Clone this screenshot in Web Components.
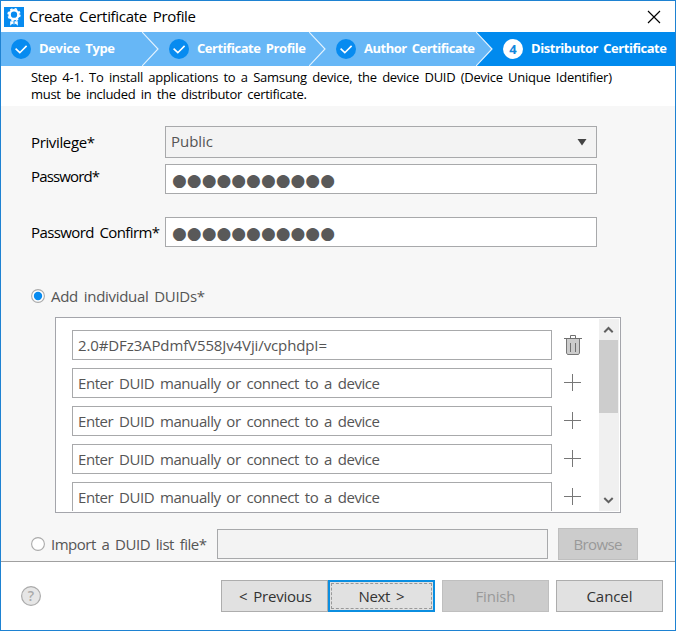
<!DOCTYPE html>
<html lang="en"><head><meta charset="utf-8"><title>Create Certificate Profile</title>
<style>
html,body{margin:0;height:100%;overflow:hidden;background:#fff}
body{font:15px/20px "Open Sans","Noto Sans",sans-serif;color:#000}
</style></head><body>
<certificate-dialog></certificate-dialog>
<script>
function define(name, html, ready) {
  const t = document.createElement('template');
  t.innerHTML = html;
  customElements.define(name, class extends HTMLElement {
    connectedCallback() {
      if (this.shadowRoot) return;
      this.attachShadow({mode: 'open'}).appendChild(t.content.cloneNode(true));
      if (ready) ready(this, this.shadowRoot);
    }
  });
}

/* A single line of text, tracked to fill the width given by its "w" attribute. */
define('fit-text', `<style>:host{display:block;flex:none;white-space:pre;word-spacing:2.3px}span{display:inline-block;white-space:pre}</style><span></span>`, (el, r) => {
  const s = r.querySelector('span'), w = +el.getAttribute('w');
  s.textContent = el.getAttribute('text');
  el.style.width = w + 'px';
  const n = [...s.textContent].length;
  s.style.letterSpacing = (w - s.getBoundingClientRect().width) / (n - 1) + 'px';
});

define('title-bar', `<style>
:host{display:flex;align-items:center;height:31px;padding-left:3px;background:#fff;box-sizing:border-box}
svg{display:block;flex:none}.t{margin:0 auto 2px 5px}.x{margin-right:14px}</style>
<svg width="20" height="20" viewBox="0 0 20 20"><rect width="20" height="20" fill="#078bf0"/><circle cx="10" cy="7.7" r="4.4" fill="none" stroke="#fff" stroke-width="2.5"/><circle cx="10" cy="7.7" r="5.9" fill="none" stroke="#fff" stroke-width="1.5" stroke-dasharray="2.4 2.23"/><path d="M6.2 14.3h3.3v3.3l-1.3-.8-2 2zM10.5 14.3h3.3v4.5l-2-2-1.3.8z" fill="#fff"/></svg>
<fit-text class="t" text="Create Certificate Profile" w="167"></fit-text>
<svg class="x" width="14" height="14" viewBox="0 0 14 14"><path d="M1 1l12 12M13 1L1 13" stroke="#000" stroke-width="1.15"/></svg>`);

define('wizard-step', `<style>
:host{display:flex;align-items:center;height:34px;box-sizing:border-box;background:#67b7f6;color:#fff;font-weight:700;font-size:13px}
svg{display:block;flex:none}fit-text{margin-left:8px;margin-bottom:2px}.c{margin-left:auto}
:host([active]){background:#008aee}</style>
<svg class="i" width="20" height="20" viewBox="0 0 20 20"></svg><svg class="c" width="17" height="34" viewBox="0 0 17 34"><path class="f" d="M0 0L16 17 0 34H17V0z"/><path d="M0 0L16 17 0 34" fill="none" stroke="#e4f3ff" stroke-width="1.15"/></svg>`,
(el, r) => {
  const a = el.hasAttribute('active');
  r.querySelector('.i').innerHTML = a
    ? '<circle cx="10" cy="10" r="10" fill="#fff"/><text x="10" y="14.6" text-anchor="middle" font-size="13" font-weight="700" fill="#1488dd">4</text>'
    : '<circle cx="10" cy="10" r="10" fill="#078bf0"/><path d="M4.6 9.7l4.2 4 6.8-6.8" fill="none" stroke="#fff" stroke-width="1.6"/>';
  const label = document.createElement('fit-text');
  label.setAttribute('text', el.getAttribute('label'));
  label.setAttribute('w', el.getAttribute('w'));
  r.querySelector('.i').after(label);
  if (a) r.querySelector('.c').remove();
  else r.querySelector('.f').setAttribute('fill', el.hasAttribute('before-active') ? '#008aee' : '#67b7f6');
});

define('wizard-steps', `<style>:host{display:grid;grid-template-columns:158px 167px 167px 1fr;height:34px;background:#67b7f6}
wizard-step{padding-left:10px}</style>
<wizard-step label="Device Type" w="76"></wizard-step><wizard-step label="Certificate Profile" w="109"></wizard-step><wizard-step label="Author Certificate" w="111" before-active></wizard-step><wizard-step label="Distributor Certificate" w="136" active></wizard-step>`);

define('text-box', `<style>:host{display:flex;align-items:center;box-sizing:border-box;flex:none;height:30px;border:1px solid #a8a9ab;background:#fff;color:#555;padding:0 0 0 5px}
:host([muted]){background:#f3f3f3}</style><slot></slot>`);

define('push-button', `<style>:host{display:flex;align-items:center;justify-content:center;box-sizing:border-box;flex:none;width:107px;height:32px;border:1px solid #adadad;background:#e1e1e1;color:#333;position:relative}
:host([off]){background:#ccc;border-color:#bfbfbf;color:#999}
:host([focused]){border:2px solid #0b8ee0}
:host([focused])::before{content:"";position:absolute;inset:1px;border:1px dashed #999}</style><slot></slot>`);

define('radio-option', `<style>:host{display:flex;align-items:center;gap:6px;height:20px;color:#555}svg{display:block;flex:none}</style>
<svg width="14" height="14" viewBox="0 0 14 14"><circle cx="7" cy="7" r="6.4" fill="#fff" stroke="#aaa" stroke-width="1.1"/><circle class="d" cx="7" cy="7" r="4.2" fill="#078bf0"/></svg><slot></slot>`,
(el, r) => { if (!el.hasAttribute('checked')) r.querySelector('.d').remove(); });

define('duid-row', `<style>:host{display:flex;align-items:center;gap:12px;height:30px;flex:none}text-box{width:480px}svg{display:block}</style>
<text-box><slot></slot></text-box><svg width="18" height="20" viewBox="0 0 18 20"></svg>`,
(el, r) => {
  r.querySelector('svg').innerHTML = el.hasAttribute('filled')
    ? '<path d="M2.5 3.5h13V18l-1 1.5h-11L2.5 18z" fill="#ccc" stroke="#777"/><path d="M0 3.5h18M6.5 3.5v-3h5v3M6.5 8v9M11.5 8v9" fill="none" stroke="#707070"/>'
    : '<path d="M0 9.5h17M8.5 1v17" stroke="#777" stroke-width="1"/>';
});

define('scroll-bar', `<style>:host{display:flex;flex-direction:column;align-items:flex-start;width:20px;height:192px;background:#f0f0f0}
svg{display:block;flex:none}.thumb{width:19px;height:73px;background:#cdcdcd}.d{margin-top:auto}</style>
<svg width="20" height="21" viewBox="0 0 20 21"><path d="M5.3 13.2L9.5 9l4.2 4.2" fill="none" stroke="#606060" stroke-width="2"/></svg><div class="thumb"></div><svg class="d" width="20" height="21" viewBox="0 0 20 21"><path d="M5.3 8L9.5 12.2 13.7 8" fill="none" stroke="#606060" stroke-width="2"/></svg>`);

define('duid-list', `<style>:host{display:flex;box-sizing:border-box;width:566px;height:196px;border:1px solid #a4a5ab;background:#fff;padding:1px;overflow:hidden}
.rows{display:flex;flex-direction:column;gap:8px;padding:11px 0 0 15px;height:192px;box-sizing:border-box;width:542px;overflow:hidden;flex:none}</style>
<div class="rows"><duid-row filled><fit-text text="2.0#DFz3APdmfV558Jv4Vji/vcphdpI=" w="249"></fit-text></duid-row>
${'<duid-row><fit-text text="Enter DUID manually or connect to a device" w="302"></fit-text></duid-row>'.repeat(4)}</div><scroll-bar></scroll-bar>`);

define('profile-form', `<style>:host{display:block;box-sizing:border-box;height:455px;padding:20px 0 0 30px;background:#f7f7f7}
.f{display:flex;align-items:center}.l{width:134px}
text-box{width:432px}.sel{height:32px}.sel svg{margin:0 9px 0 auto}.sel fit-text{margin-bottom:2px}
.dots{font:17px/26px "DejaVu Sans",sans-serif;color:#595959;word-spacing:0;margin-left:1px;margin-top:2px}
.a{margin-top:6px}.b{margin-top:23px}.up{margin-bottom:6px}.o{margin-top:39px}duid-list{margin:11px 0 0 24px}
.imp{display:flex;align-items:center;margin-top:15px}.imp radio-option{width:186px}.imp text-box{width:331px}push-button{width:80px;margin-left:10px}</style>
<div class="f"><div class="l"><fit-text text="Privilege*" w="64"></fit-text></div><text-box class="sel" muted><fit-text text="Public" w="42"></fit-text><svg width="10" height="8" viewBox="0 0 10 8"><path d="M.5 1h9L5 7.5z" fill="#444"/></svg></text-box></div>
<div class="f a"><div class="l up"><fit-text text="Password*" w="69"></fit-text></div><text-box><fit-text class="dots" text="●●●●●●●●●●●" w="163"></fit-text></text-box></div>
<div class="f b"><div class="l"><fit-text text="Password Confirm*" w="129"></fit-text></div><text-box><fit-text class="dots" text="●●●●●●●●●●●" w="163"></fit-text></text-box></div>
<radio-option class="o" checked><fit-text text="Add individual DUIDs*" w="154"></fit-text></radio-option>
<duid-list></duid-list>
<div class="imp"><radio-option><fit-text text="Import a DUID list file*" w="156"></fit-text></radio-option><text-box muted></text-box><push-button off><fit-text text="Browse" w="49"></fit-text></push-button></div>`);

define('dialog-footer', `<style>:host{display:flex;align-items:flex-start;box-sizing:border-box;height:69px;border-top:1px solid #a0a0a0;padding:18px 12px 0 20px;background:#fff}
svg{display:block;margin:6px auto 0 0}.g{margin-left:7px}.p{margin-left:2px}</style>
<svg width="20" height="20" viewBox="0 0 20 20"><circle cx="10" cy="10" r="9.4" fill="#e6e6e6" stroke="#ababab" stroke-width="1.2"/><text x="10" y="15" text-anchor="middle" font-size="14" font-weight="600" fill="#aaa">?</text></svg>
<push-button><fit-text class="p" text="&lt; Previous" w="73"></fit-text></push-button><push-button focused><fit-text text="Next &gt;" w="46"></fit-text></push-button><push-button class="g" off><fit-text text="Finish" w="40"></fit-text></push-button><push-button class="g"><fit-text text="Cancel" w="46"></fit-text></push-button>`);

define('certificate-dialog', `<style>:host{display:flex;flex-direction:column;box-sizing:border-box;width:676px;height:631px;border:1px solid #1e82d2;background:#fff}
.d{height:40px;box-sizing:border-box;padding:3px 0 0 30px;font-size:13px;line-height:17px}</style>
<title-bar></title-bar><wizard-steps></wizard-steps>
<div class="d"><fit-text text="Step 4-1. To install applications to a Samsung device, the device DUID (Device Unique Identifier)" w="581"></fit-text><fit-text text="must be included in the distributor certificate." w="276"></fit-text></div>
<profile-form></profile-form><dialog-footer></dialog-footer>`);
</script></body></html>
